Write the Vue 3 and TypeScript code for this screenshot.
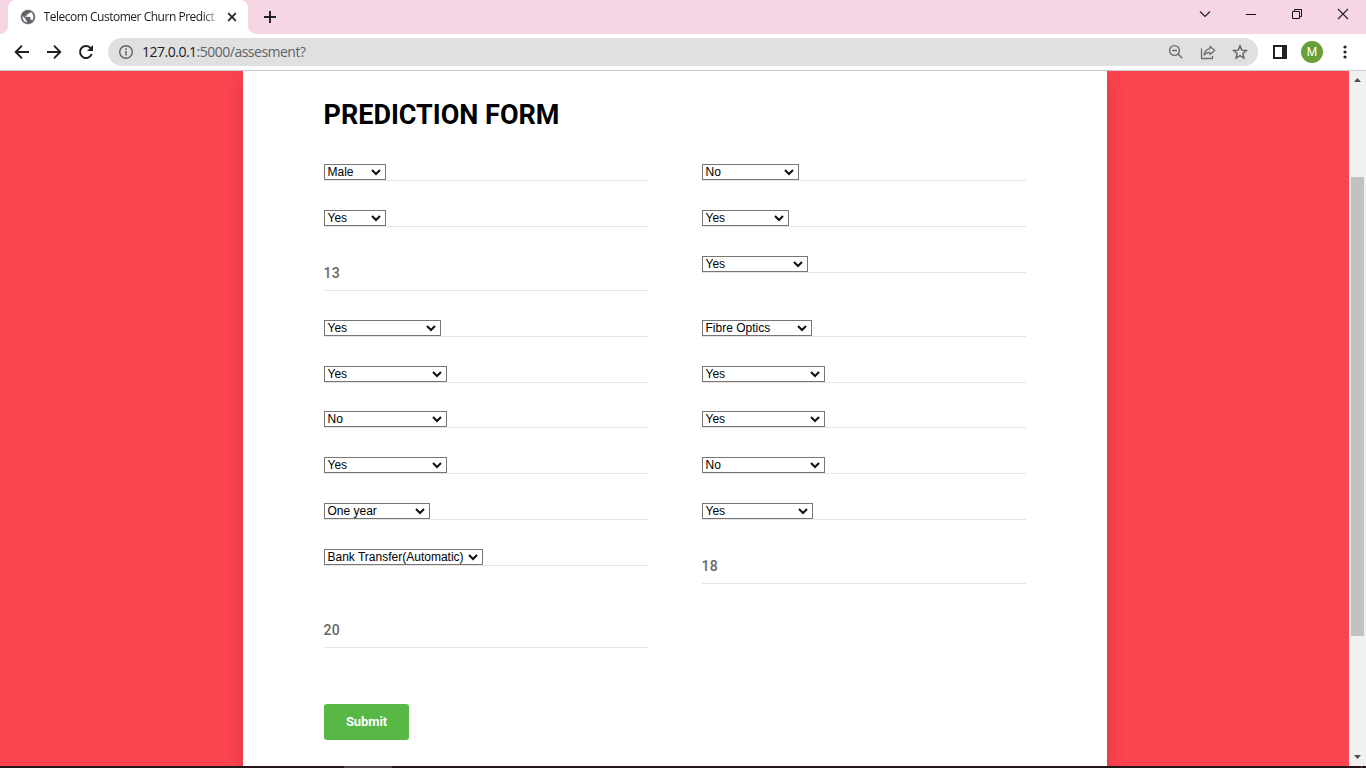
<script setup lang="ts">
interface Field {
  kind: 'select' | 'input'
  value: string
  width?: number
}

const select = (value: string, width: number): Field => ({ kind: 'select', value, width })
const input = (value: string): Field => ({ kind: 'input', value })

const fields: Field[] = [
  select('Male', 62), select('No', 97),
  select('Yes', 62), select('Yes', 87),
  input('13'), select('Yes', 106),
  select('Yes', 117), select('Fibre Optics', 110),
  select('Yes', 123), select('Yes', 123),
  select('No', 123), select('Yes', 123),
  select('Yes', 123), select('No', 123),
  select('One year', 106), select('Yes', 111),
  select('Bank Transfer(Automatic)', 159), input('18'),
  input('20'),
]
</script>

<template>
  <div class="window">
    <header class="titlebar">
      <div class="tab">
        <svg class="globe" width="16" height="16" viewBox="0.600 0.600 22.800 22.800">
          <path d="M12 2C6.480 2 2 6.480 2 12s4.480 10 10 10 10-4.480 10-10S17.520 2 12 2zm-1 17.930c-3.950-.49-7-3.850-7-7.930 0-.62.08-1.210.21-1.790L9 15v1c0 1.100.9 2 2 2v1.930zm6.900-2.540c-.26-.81-1-1.390-1.900-1.390h-1v-3c0-.55-.45-1-1-1H8v-2h2c.55 0 1-.45 1-1V7h2c1.100 0 2-.9 2-2v-.41c2.930 1.190 5 4.060 5 7.410 0 2.080-.8 3.970-2.100 5.390z" fill="#5f6368" stroke="#5f6368" stroke-width=".5" />
        </svg>
        <span class="tab-title">Telecom Customer Churn Predict</span>
        <svg class="tab-close" width="10" height="10" viewBox="0 0 10 10"><path d="M1.200 1.200l7.600 7.600M8.800 1.200L1.200 8.800" stroke="#202124" stroke-width="1.700" /></svg>
      </div>
      <svg class="new-tab" width="12" height="12" viewBox="0 0 12 12"><path d="M6 0v12M0 6h12" stroke="#202124" stroke-width="1.900" /></svg>
      <div class="controls">
        <svg width="12" height="12" viewBox="0 0 12 12"><path d="M1 3.500l5 5 5-5" fill="none" stroke="#222" stroke-width="1.200" /></svg>
        <svg width="12" height="12" viewBox="0 0 12 12"><path d="M1 6.500h10" stroke="#111" /></svg>
        <svg width="12" height="12" viewBox="0 0 12 12"><path d="M1.500 3.500h7v7h-7zM3.500 3.500v-2h7v7h-2" fill="none" stroke="#111" /></svg>
        <svg width="12" height="12" viewBox="0 0 12 12"><path d="M1 1l10 10M11 1L1 11" stroke="#222" stroke-width="1.100" /></svg>
      </div>
    </header>

    <nav class="toolbar">
      <svg class="nav-icon" width="16" height="16" viewBox="0 0 16 16"><path d="M15 8H2M8 1.700L1.700 8 8 14.300" fill="none" stroke="#202124" stroke-width="1.900" /></svg>
      <svg class="nav-icon" width="16" height="16" viewBox="0 0 16 16"><path d="M1 8h13M8 1.700L14.300 8 8 14.300" fill="none" stroke="#202124" stroke-width="1.900" /></svg>
      <svg class="nav-icon" width="16" height="16" viewBox="0 0 16 16"><path d="M13.700 10A6 6 0 1 1 12.300 3.800L13.500 5" fill="none" stroke="#202124" stroke-width="2" /><path d="M15 1v6H9z" fill="#202124" /></svg>
      <div class="omnibox">
        <svg class="info" width="16" height="16" viewBox="0 0 16 16"><circle cx="8" cy="8" r="6.300" fill="none" stroke="#5f6368" stroke-width="1.400" /><path d="M8 7v4.500M8 4.300v1.600" stroke="#5f6368" stroke-width="1.500" /></svg>
        <span class="url"><b>127.0.0.1</b>:5000/assesment?</span>
        <div class="actions">
          <svg width="16" height="16" viewBox="0 0 16 16"><circle cx="6.500" cy="6.500" r="4.900" fill="none" stroke="#6b6e72" stroke-width="1.400" /><path d="M4 6.500h5M10 10l4.300 4.300" stroke="#6b6e72" stroke-width="1.500" /></svg>
          <svg width="16" height="16" viewBox="0 0 16 16"><path d="M1.500 4.500v10h11V12" fill="none" stroke="#6b6e72" stroke-width="1.300" /><path d="M10 2.200l4.800 4.200L10 10.600V8.300C7.200 8.200 5.500 9 4 11.200 4.400 7.700 6.400 5.200 10 4.600z" fill="none" stroke="#6b6e72" stroke-width="1.300" stroke-linejoin="round" /></svg>
          <svg width="16" height="16" viewBox="0 0 16 16"><path d="M8 1.900l1.800 4.200 4.600.4-3.500 3 1 4.500L8 11.600 4.100 14l1-4.500-3.500-3 4.600-.4z" fill="none" stroke="#5f6368" stroke-width="1.400" /></svg>
        </div>
      </div>
      <svg class="panel-icon" width="14" height="14" viewBox="0 0 14 14"><path d="M1 1h12v12H1z" fill="#fff" stroke="#202124" stroke-width="2" /><path d="M9 0h5v14H9z" fill="#202124" /></svg>
      <span class="avatar">M</span>
      <svg class="kebab" width="4" height="14" viewBox="0 0 4 14"><g fill="#202124"><circle cx="2" cy="2" r="1.600" /><circle cx="2" cy="7" r="1.600" /><circle cx="2" cy="12" r="1.600" /></g></svg>
    </nav>

    <div class="viewport">
      <main class="page">
        <section class="card">
          <h1>PREDICTION FORM</h1>
          <div class="fields">
            <div v-for="(field, i) in fields" :key="i" class="field" :class="field.kind">
              <div v-if="field.kind === 'select'" class="dropdown" :style="{ width: field.width + 'px' }">
                <span>{{ field.value }}</span>
                <svg width="10" height="8" viewBox="0 0 10 8"><path d="M1 2l4 4 4-4" fill="none" stroke="#101010" stroke-width="2" /></svg>
              </div>
              <template v-else>{{ field.value }}</template>
            </div>
          </div>
          <button class="submit" type="button">Submit</button>
        </section>
      </main>
      <aside class="scrollbar">
        <svg width="7" height="4" viewBox="0 0 7 4"><path d="M0 4L3.500 0 7 4z" fill="#505050" /></svg>
        <div class="thumb"></div>
        <svg width="7" height="4" viewBox="0 0 7 4"><path d="M0 0L3.500 4 7 0z" fill="#505050" /></svg>
      </aside>
    </div>
    <footer class="taskbar"><i class="running"></i><i class="edge"></i></footer>
  </div>
</template>

<style>
body { margin: 0; overflow: hidden; }
</style>

<style scoped>
* { box-sizing: border-box; }
svg { display: block; flex: none; }
.window { width: 1366px; height: 768px; display: flex; flex-direction: column; overflow: hidden; background: #fff; }

.titlebar { height: 34px; flex: none; display: flex; align-items: center; background: #f6d5e4; }
.tab { position: relative; width: 240px; height: 34px; margin-left: 8px; padding-left: 12px; display: flex; align-items: center; background: #fff; border-radius: 8px 8px 0 0; }
.tab::before, .tab::after { content: ''; position: absolute; bottom: 0; width: 8px; height: 8px; }
.tab::before { left: -8px; background: radial-gradient(circle at 0 0, transparent 7.5px, #fff 8.2px); }
.tab::after { right: -8px; background: radial-gradient(circle at 100% 0, transparent 7.5px, #fff 8.2px); }
.tab-title { width: 175px; margin-left: 7.500px; white-space: nowrap; font: 12px/18px "Open Sans", sans-serif; letter-spacing: -0.480px; color: #202124; mask-image: linear-gradient(90deg, #000 158px, rgba(0, 0, 0, 0.15) 175px); }
.tab-close { margin-left: 8.500px; }
.new-tab { margin-left: 16px; }
.controls { margin-left: auto; margin-right: 17px; margin-top: -6px; display: flex; gap: 34px; }

.toolbar { height: 37px; flex: none; display: flex; align-items: center; padding-left: 14px; border-bottom: 1px solid #c9c9c9; }
.nav-icon { margin-right: 16px; }
.omnibox { width: 1150px; height: 28px; margin-left: -2px; padding: 0 10px; display: flex; align-items: center; background: #e0e0e0; border-radius: 14px; }
.url { margin-left: 8px; font: 14px/20px "Open Sans", sans-serif; letter-spacing: -0.500px; color: #5f6368; white-space: nowrap; }
.url b { font-weight: 400; color: #202124; }
.actions { margin-left: auto; display: flex; gap: 16px; }
.panel-icon { margin-left: 15px; }
.avatar { width: 22px; height: 22px; margin-left: 14px; border-radius: 50%; background: #689f38; color: #fff; font: 12px/22px Roboto, sans-serif; text-align: center; }
.kebab { margin-left: 19.500px; }

.viewport { height: 695px; flex: none; display: flex; }
.page { flex: 1; display: flex; overflow: hidden; background: #fc4350; }
.card { width: 864px; margin-left: 243px; padding: 27px 81px 0; background: #fff; box-shadow: 0 7px 18px rgba(0, 0, 0, 0.15); }
h1 { margin: 0 0 0 -0.500px; font: 700 27px/34px Roboto, sans-serif; letter-spacing: 0; color: #000; white-space: nowrap; }
.fields { margin-top: 32px; display: grid; grid-template-columns: 324px 324px; column-gap: 54px; grid-template-rows: 46px 46px 64px 46px 45px 46px 46px 46px 64px 35px; align-items: start; }
.field { border-bottom: 1px solid #e5e5e5; }
.dropdown { height: 16px; padding: 0 4px 0 2.500px; display: flex; align-items: center; justify-content: space-between; border: 1px solid #767676; background: #fff; font: 12px/14px "Liberation Sans", Arial, sans-serif; color: #000; white-space: nowrap; }
.input { height: 35px; font: 500 14px/34px Roboto, sans-serif; letter-spacing: 0.300px; text-indent: -0.400px; color: #666; }
.submit { display: block; width: 85px; height: 36px; margin-top: 56px; padding: 0; border: 0; border-radius: 3px; background: #57b846; color: #fff; font: 700 13px/36px Roboto, sans-serif; letter-spacing: -0.100px; }

.scrollbar { width: 17px; padding: 7px 0; display: flex; flex-direction: column; align-items: center; background: #f1f1f1; }
.thumb { width: 13px; height: 459px; margin: 95px 0 auto; background: #c1c1c1; }
.taskbar { height: 2px; flex: none; display: flex; background: #24151d; }
.running { width: 48px; margin-left: 344px; background: #51454c; }
.edge { width: 1px; margin-left: auto; margin-right: 4px; background: #62555c; }
</style>
